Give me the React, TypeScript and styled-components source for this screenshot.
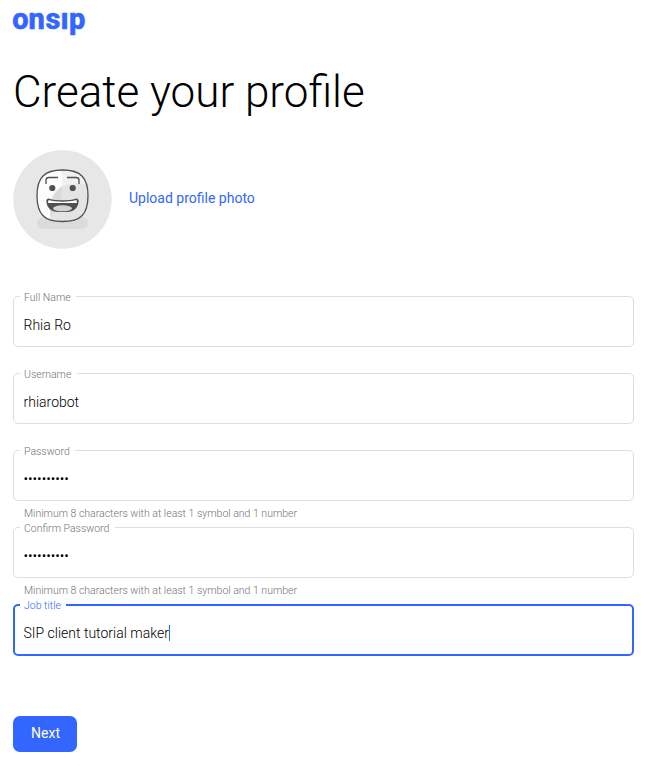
import React from 'react';
import styled, { createGlobalStyle } from 'styled-components';

const BLUE = '#3366ff';

const GlobalStyle = createGlobalStyle`
  *, *::before, *::after { box-sizing: border-box; }
  body {
    margin: 0;
    background: #fff;
    color: #000;
    font-family: Roboto, "Liberation Sans", sans-serif;
    font-weight: 300;
  }
`;

const Page = styled.main`
  display: flex;
  flex-direction: column;
  align-items: flex-start;
  width: 660px;
  height: 774px;
  padding: 8px 26px 0 13px;
  overflow: hidden;
`;

const Logo = styled.svg`
  display: block;
  width: 74px;
  height: 30px;
  overflow: visible;
  text {
    font-family: Roboto, sans-serif;
    font-weight: 800;
    font-size: 29px;
    fill: ${BLUE};
    stroke: ${BLUE};
    stroke-width: 0.5px;
    stroke-linejoin: miter;
  }
`;

const Title = styled.h1`
  margin: 28px 0 0;
  font-size: 44px;
  line-height: 52px;
  font-weight: 300;
  white-space: nowrap;
`;

const PhotoRow = styled.section`
  display: flex;
  align-items: center;
  gap: 17px;
  height: 99px;
  margin-top: 32px;
`;

const Avatar = styled.svg`
  display: block;
  width: 99px;
  height: 99px;
`;

const UploadLink = styled.a`
  color: ${BLUE};
  font-size: 14px;
  line-height: 20px;
  font-weight: 400;
  margin-top: -3px;
`;

const Form = styled.form`
  display: flex;
  flex-direction: column;
  width: 100%;
  margin-top: 47px;
`;

const FieldSlot = styled.div`
  height: 77px;
`;

const FieldBox = styled.div<{ $active?: boolean }>`
  position: relative;
  display: flex;
  align-items: center;
  height: ${(p) => (p.$active ? 52 : 51)}px;
  padding: ${(p) => (p.$active ? '5px 8.5px 0' : '6px 9.5px 0')};
  border: ${(p) => (p.$active ? `2px solid ${BLUE}` : '1px solid #dedede')};
  border-radius: 5px;
`;

const Label = styled.label<{ $active?: boolean }>`
  position: absolute;
  top: ${(p) => (p.$active ? -7 : -6)}px;
  left: ${(p) => (p.$active ? 5 : 6)}px;
  padding: 0 5.5px 0 4px;
  background: #fff;
  color: ${(p) => (p.$active ? BLUE : '#737373')};
  font-size: 10.5px;
  line-height: 14px;
  white-space: nowrap;
`;

const Value = styled.span`
  font-size: 14px;
  line-height: 20px;
  color: #000;
  white-space: nowrap;
`;

const Caret = styled.span`
  width: 1px;
  height: 16px;
  background: ${BLUE};
`;

const Hint = styled.p`
  margin: 6px 0 0 11px;
  color: #737373;
  font-size: 10.5px;
  line-height: 14px;
`;

const NextButton = styled.button`
  width: 64px;
  height: 36px;
  margin-top: 35px;
  padding: 0 0 2px 1px;
  border: 0;
  border-radius: 7px;
  background: ${BLUE};
  color: #fff;
  font: 400 14px/20px Roboto, sans-serif;
`;

type FieldData = { label: string; value: string; hint?: string; active?: boolean };

const HINT = 'Minimum 8 characters with at least 1 symbol and 1 number';

const fields: FieldData[] = [
  { label: 'Full Name', value: 'Rhia Ro' },
  { label: 'Username', value: 'rhiarobot' },
  { label: 'Password', value: '••••••••••', hint: HINT },
  { label: 'Confirm Password', value: '••••••••••', hint: HINT },
  { label: 'Job title', value: 'SIP client tutorial maker', active: true },
];

function Field({ label, value, hint, active }: FieldData) {
  return (
    <FieldSlot>
      <FieldBox $active={active}>
        <Label $active={active}>{label}</Label>
        <Value>{value}</Value>
        {active && <Caret />}
      </FieldBox>
      {hint && <Hint>{hint}</Hint>}
    </FieldSlot>
  );
}

function RobotAvatar() {
  return (
    <Avatar viewBox="0 0 99 99" aria-hidden="true">
      <defs>
        <clipPath id="face">
          <path d="M49.5 20C68 20 75 28 75 45.500C75 64 68 71.500 49.500 71.500C31 71.500 24 64 24 45.500C24 28 31 20 49.500 20Z" />
        </clipPath>
      </defs>
      <circle cx="49.500" cy="49.500" r="49.200" fill="#e7e7e7" />
      <rect x="24" y="67" width="51" height="12" rx="6" fill="#dbdbdb" />
      <g clipPath="url(#face)">
        <rect x="23" y="19" width="53" height="54" fill="#fcfcfc" />
        <path d="M46 18C50 22 50 29 49 35C39 41 35 52 38 73H77V18Z" fill="#f0f0f0" />
        <path d="M38 73C35 55 38 45 49 37C57 32 68 34 77 34V73Z" fill="#e4e4e4" />
        <path d="M49 37C50 48 46 59 38 66C36 54 39 43 49 37Z" fill="#dadada" />
      </g>
      <path d="M49.500 20C68 20 75 28 75 45.500C75 64 68 71.500 49.500 71.500C31 71.500 24 64 24 45.500C24 28 31 20 49.500 20Z" fill="none" stroke="#505050" strokeWidth="1.300" />
      <path d="M33 34V30Q33 27.500 36 27.500H45M54 27.500H63Q66 27.500 66 30V34" fill="none" stroke="#505050" strokeWidth="1.300" />
      <circle cx="39.300" cy="38" r="3.100" fill="#505050" />
      <circle cx="59.700" cy="38" r="3.100" fill="#505050" />
      <path d="M36 49.200C43 51.500 56 51.500 63 49.200Q65.500 49.200 65 52C64 59 60 61.500 49.500 61.500C39 61.500 35 59 34 52Q33.500 49.200 36 49.200Z" fill="#505050" stroke="#505050" strokeWidth="1.200" />
      <path d="M35.500 50C43 52.200 56 52.200 63.500 50L64 53H35Z" fill="#fff" />
      <ellipse cx="49.500" cy="58.300" rx="9.500" ry="3" fill="#d3d3d3" />
    </Avatar>
  );
}

export default function App() {
  return (
    <>
      <GlobalStyle />
      <Page>
        <Logo viewBox="0 0 74 30" role="img" aria-label="onsip">
          <text x="-0.700 15.500 32.500 47.600 56" y="21.200">onsıp</text>
        </Logo>
        <Title>Create your profile</Title>
        <PhotoRow>
          <RobotAvatar />
          <UploadLink>Upload profile photo</UploadLink>
        </PhotoRow>
        <Form>
          {fields.map((f) => (
            <Field key={f.label} {...f} />
          ))}
          <NextButton type="button">Next</NextButton>
        </Form>
      </Page>
    </>
  );
}
